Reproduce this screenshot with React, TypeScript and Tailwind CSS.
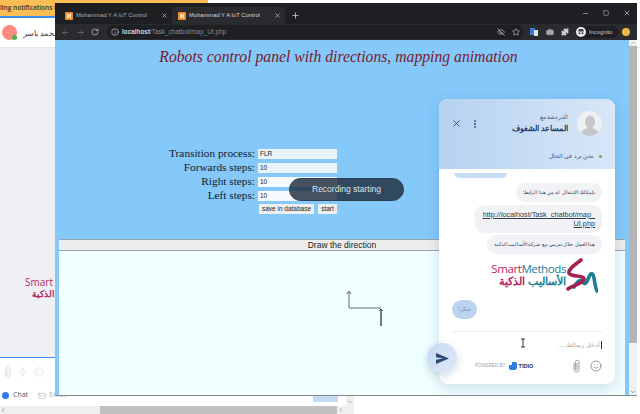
import { ArrowLeft, ArrowRight, RotateCw, Info, EyeOff, Star, Puzzle, X, Plus, Minus, Square, MoreVertical, Smile, Zap, Mail, ChevronUp, ChevronDown, ChevronLeft, ChevronRight, Camera } from "lucide-react";

const XamppIcon = () => (
  <svg width="8" height="8" viewBox="0 0 8 8" className="shrink-0">
    <rect width="8" height="8" rx="1" fill="#f08a24" />
    <path d="M2 2 L6 6 M6 2 L2 6" stroke="#fff3e0" strokeWidth="1.4" />
  </svg>
);

const Tab = ({ active }: { active?: boolean }) => (
  <div className={`flex h-[17px] w-[113px] items-center gap-[3px] rounded-t-[5px] pl-[6px] pr-[4px] text-[5.8px] ${active ? "bg-[#292b2f] text-[#d4d6d9]" : "text-[#a9acb0]"}`}>
    <XamppIcon />
    <span className="flex-1 whitespace-nowrap">Mohammad Y A IoT Control</span>
    <X size={7} strokeWidth={2} className="text-[#d8dadd]" />
  </div>
);

const FormRow = ({ label, value, tinted }: { label: string; value: string; tinted?: boolean }) => (
  <div className="flex h-[14px] items-center justify-end gap-[3px]">
    <span className="text-right text-[11.3px] leading-none text-[#10202c]">{label}</span>
    <span className={`flex h-[10px] w-[79px] items-center px-[2px] font-['Liberation_Sans',sans-serif] text-[6.5px] text-[#222] ${tinted ? "bg-[#e8f3fc]" : "bg-[#f6fafd]"}`}>{value}</span>
  </div>
);

const ChatBubble = ({ children, className }: { children: React.ReactNode; className?: string }) => (
  <div dir="rtl" className={`whitespace-nowrap rounded-[9px] bg-[#f0f2f6] px-[7px] py-[5px] text-[5.2px] leading-[9px] text-[#2d3645] ${className ?? ""}`}>{children}</div>
);

const ClipIcon = ({ color }: { color: string }) => (
  <svg width="9" height="14" viewBox="0 0 9 14" fill="none" stroke={color} strokeWidth="1">
    <path d="M2 4 V10.5 a2.5 2.5 0 0 0 5 0 V3 a1.8 1.8 0 0 0 -3.6 0 V10 a0.8 0.8 0 0 0 1.6 0 V4" />
  </svg>
);

const SmartLogo = () => (
  <div className="flex h-[36px] items-start justify-end pr-[4px]">
    <div className="mt-[4px] flex flex-col items-end font-['Open_Sans',sans-serif]">
      <span className="text-[11.5px] leading-[13px] tracking-[-0.4px]">
        <span className="text-[#b5275f]">Smart</span>
        <span className="text-[#1c7d94]">Methods</span>
      </span>
      <span dir="rtl" className="font-['Noto_Sans',sans-serif] text-[11px] font-semibold leading-[12px]">
        <span className="text-[#1c7d94]">الأساليب </span>
        <span className="text-[#b5275f]">الذكية</span>
      </span>
    </div>
    <svg width="34" height="36" viewBox="0 0 34 36" fill="none" className="-ml-[2px]">
      <path d="M10 29 C14 22 17 21 19 24 C21 28 23 24 25 19 C27 14 29 15 30 20 C31 25 31 29 33 33" stroke="#1c7d94" strokeWidth="3.6" strokeLinecap="round" />
      <path d="M17 2 C12 6 4 11 5 15 C6 19 20 17 20 21 C20 25 8 28 4 31" stroke="#a3234f" strokeWidth="3.6" strokeLinecap="round" />
    </svg>
  </div>
);

const ChatWidget = () => (
  <div className="absolute left-[439px] top-[99px] flex h-[285px] w-[176px] flex-col overflow-hidden rounded-[9px] bg-white shadow-[0_4px_14px_rgba(30,70,120,0.18)]">
    <div className="h-[70px] shrink-0 bg-gradient-to-r from-[#b5d2f1] to-[#d9e7f7] pl-[12px] pr-[13px] pt-[12px]">
      <div className="flex items-center">
        <X size={11} strokeWidth={2} className="text-[#2d4a70]" />
        <MoreVertical size={10} strokeWidth={2.5} className="ml-[8px] text-[#2d4a70]" />
        <div dir="rtl" className="ml-auto mr-[9px] text-right">
          <div className="text-[5.5px] leading-[9px] text-[#3d5575]">الدردشة مع</div>
          <div className="text-[8px] font-semibold leading-[12px] text-[#24406a]">المساعد الشغوف</div>
        </div>
        <div className="flex h-[25px] w-[25px] items-end justify-center overflow-hidden rounded-full bg-[#eef0f2]">
          <svg width="20" height="22" viewBox="0 0 20 22">
            <ellipse cx="10" cy="8" rx="5" ry="6.5" fill="#c5c7ca" />
            <path d="M0 22 C1 16 5 15 8 14 L12 14 C15 15 19 16 20 22 Z" fill="#c5c7ca" />
          </svg>
        </div>
      </div>
      <div className="mt-[16px] flex items-center justify-end gap-[5px]">
        <span dir="rtl" className="text-[5.5px] text-[#3d5a80]">نحن نرد في الحال</span>
        <span className="h-[3px] w-[3px] rounded-full bg-[#6aa84f]" />
      </div>
    </div>
    <div className="relative flex flex-1 flex-col items-end px-[13px] pt-[14px]">
      <div className="absolute left-[15px] top-[4px] h-[5px] w-[53px] rounded-b-[8px] bg-[#c8dcf3]" />
      <ChatBubble>بإمكانك الإنتقال له من هنا الرابط:</ChatBubble>
      <div className="mt-[3px] w-[127px] rounded-[9px] bg-[#f0f2f6] px-[7px] py-[5px] text-right font-['Liberation_Sans',sans-serif] text-[7.3px] leading-[9px] text-[#333b49] underline">
        http://localhost/Task_chatbot/map_
        <br />
        UI.php
      </div>
      <ChatBubble className="mt-[2px]">هذا العمل خلال تدريبي مع شركة الأساليب الذكية</ChatBubble>
      <div className="mt-[4px] w-full"><SmartLogo /></div>
      <div className="mt-[6px] self-start rounded-[10px] bg-[#bcd4f1] px-[6px] py-[5px] text-[6px] leading-[9px] text-[#7f98b8]" dir="rtl">شكرا</div>
      <div className="mt-[12px] h-px w-full bg-[#ecedf0]" />
      <div dir="rtl" className="mt-[9px] w-full text-[6px] leading-[9px] text-[#9a9fa6]"><span className="border-r border-[#333] pr-[1px]">أدخل رسالتك ...</span></div>
      <div className="mt-[9px] flex h-[14px] w-full items-center">
        <span className="ml-[23px] font-['Liberation_Sans',sans-serif] text-[4.5px] text-[#9da3ab]">POWERED BY</span>
        <svg width="8" height="8" viewBox="0 0 8 8" className="ml-[3px]">
          <path d="M0 3 H3 V0 H6 A2 2 0 0 1 8 2 V5 A3 3 0 0 1 5 8 H2 A2 2 0 0 1 0 6 Z" fill="#2f7be6" />
        </svg>
        <span className="ml-[2px] font-['Liberation_Sans',sans-serif] text-[5.5px] font-bold text-[#1f2d45]">TIDIO</span>
        <span className="ml-auto"><ClipIcon color="#97a1ac" /></span>
        <Smile size={12} strokeWidth={1.3} className="ml-[9px] text-[#5d6773]" />
      </div>
    </div>
  </div>
);

const BrowserWindow = () => (
  <div className="absolute left-[55px] top-[3px] flex h-[393px] w-[582px] flex-col overflow-hidden border-b border-[#888] bg-[#1d1f22] font-['Liberation_Sans',sans-serif]">
    <div className="flex h-[21px] shrink-0 items-end pl-[4px]">
      <Tab />
      <Tab active />
      <Plus size={9} strokeWidth={2} className="mb-[4px] ml-[6px] text-[#d8dadd]" />
      <div className="ml-auto mb-[7px] flex items-center gap-[14px] pr-[6px] text-[#c9cbce]">
        <Minus size={7} />
        <Square size={6} />
        <X size={8} />
      </div>
    </div>
    <div className="flex h-[16px] shrink-0 items-center gap-[6px] bg-[#292b2f] pl-[6px]">
      <ArrowLeft size={9} className="text-[#6d7074]" />
      <ArrowRight size={9} className="text-[#6d7074]" />
      <RotateCw size={8} className="text-[#c9cbce]" />
      <div className="ml-[2px] flex h-[14px] w-[417px] items-center gap-[3px] rounded-full bg-[#1d1f22] pl-[4px] text-[6.4px]">
        <Info size={8} className="text-[#c9cbce]" />
        <span className="font-bold text-[#d4d6d9]">localhost</span>
        <span className="-ml-[3px] text-[#8b8e92]">/Task_chatbot/map_UI.php</span>
        <EyeOff size={8} className="ml-auto text-[#c9cbce]" />
        <Star size={8} className="ml-[4px] mr-[4px] text-[#c9cbce]" />
      </div>
      <div className="flex items-center gap-[7.5px]">
        <svg width="8" height="8" viewBox="0 0 8 8">
          <rect width="5" height="7" fill="#3f78d6" />
          <rect x="4" y="2" width="4" height="6" fill="#dfe6f2" />
        </svg>
        <Camera size={8} fill="#a5a7aa" className="text-[#a5a7aa]" />
        <Puzzle size={8} fill="#d4d6d9" className="text-[#d4d6d9]" />
      </div>
      <div className="ml-[1px] flex h-[12px] w-[42px] items-center gap-[3px] rounded-full bg-[#1d1f22]">
        <svg width="10" height="10" viewBox="0 0 10 10" className="shrink-0">
          <circle cx="5" cy="5" r="5" fill="#ececec" />
          <path d="M2 4.5 H8 L7 2 H3 Z" fill="#3a3c40" />
          <circle cx="3.5" cy="6.3" r="1" fill="#3a3c40" />
          <circle cx="6.5" cy="6.3" r="1" fill="#3a3c40" />
        </svg>
        <span className="text-[5.8px] text-[#c9cbce]">Incognito</span>
      </div>
      <span className="-ml-[2px] h-[8px] w-[8px] rounded-full bg-[#f0b64a]" />
    </div>
    <div className="flex min-h-0 flex-1">
      <div className="flex min-w-0 flex-1 flex-col bg-[#85c8fa] font-['Liberation_Serif',serif]">
        <h1 className="mt-[5px] h-[28px] pr-[7px] text-center text-[15.7px] italic leading-[24px] text-[#7b1a2e]">Robots control panel with directions, mapping animation</h1>
        <div className="ml-[54px] mt-[74px] flex w-[228px] flex-col">
          <FormRow label="Transition process:" value="FLR" tinted />
          <FormRow label="Forwards steps:" value="10" tinted />
          <FormRow label="Right steps:" value="10" />
          <FormRow label="Left steps:" value="10" />
          <div className="mt-[1px] flex justify-start gap-[4px] pl-[150px] font-['Liberation_Sans',sans-serif] text-[6.5px] text-[#222]">
            <span className="flex h-[10px] w-[55px] items-center justify-center bg-[#efefef]">save in database</span>
            <span className="flex h-[10px] w-[19px] items-center justify-center bg-[#efefef]">start</span>
          </div>
        </div>
        <div className="mx-[4px] mt-[25px] flex h-[12px] shrink-0 items-center justify-center border-y border-[#9aa3aa] bg-[#ededed] font-['Liberation_Sans',sans-serif] text-[8.5px] text-[#222]">Draw the direction</div>
        <div className="mx-[4px] flex-1 bg-[#f0ffff]">
          <svg width="60" height="40" viewBox="0 0 60 40" className="ml-[284px] mt-[38px]">
            <path d="M6 19 V3 M4 5 L6 2 L8 5 M6 19 H38 M36 22 L38 20 L40 22" stroke="#666c72" strokeWidth="1" fill="none" />
            <path d="M38 37 V20" stroke="#333" strokeWidth="1.3" fill="none" />
          </svg>
        </div>
      </div>
      <div className="flex w-[8px] shrink-0 flex-col items-center bg-[#f1f1f1]">
        <ChevronUp size={6} className="text-[#777]" />
        <div className="h-[297px] w-full bg-[#b4b4b4]" />
        <div className="flex-1" />
        <ChevronDown size={6} className="text-[#333]" />
      </div>
    </div>
  </div>
);

const BackgroundApp = () => (
  <div className="absolute inset-0 flex flex-col bg-white font-['Open_Sans',sans-serif]">
    <div className="h-[16px] w-[208px] shrink-0 whitespace-nowrap bg-[#fbbd54] text-[6.5px] font-semibold leading-[15px] text-[#333]">ling notifications t</div>
    <div className="h-[2px] w-[208px] shrink-0 bg-[#3d8ef0]" />
    <div className="flex h-[30px] shrink-0 items-center gap-[6px] border-b border-[#e5e6ea] px-[2px]">
      <span className="relative h-[15px] w-[15px] rounded-full bg-[#ff8a80]">
        <span className="absolute bottom-0 right-0 h-[5px] w-[5px] rounded-full bg-[#4caf50]" />
      </span>
      <span dir="rtl" className="text-[8px] text-[#444]">محمد ياسر</span>
    </div>
    <div className="flex h-[310px] w-[208px] shrink-0 flex-col border-b border-[#3d8ef0] bg-[#eff0f4] pl-[25px] pt-[228px]">
      <span className="text-[10px] leading-[12px] text-[#b5275f]">Smart</span>
      <span dir="rtl" className="w-[30px] text-[9px] font-semibold leading-[12px] text-[#b5275f]">الذكية</span>
    </div>
    <div className="flex h-[27px] shrink-0 items-center gap-[6px] pl-[3px] text-[#dfe2e6]">
      <ClipIcon color="#dfe2e6" />
      <Zap size={10} />
      <Smile size={10} />
    </div>
    <div className="mt-[6px] flex h-[9px] items-center gap-[3px] pl-[2px] text-[7px] text-[#555]">
      <span className="h-[7px] w-[7px] rounded-full bg-[#2f7be6]" />
      <span className="ml-[1px]">Chat</span>
      <Mail size={8} className="ml-[7px] text-[#b6bcc5]" />
      <span className="text-[#aab0b8]">Email</span>
    </div>
    <div className="mt-auto flex h-[8px] w-[346px] items-center bg-[#efefef]">
      <ChevronLeft size={6} className="text-[#444]" />
      <div className="ml-[94px] h-full w-[237px] bg-[#c1c1c1]" />
      <ChevronRight size={6} className="ml-[1px] text-[#666]" />
    </div>
    <div className="absolute left-[346px] top-[396px] flex h-[18px] w-[8px] flex-col items-center bg-[#efefef] pt-[3px]">
      <ChevronDown size={6} className="text-[#666]" />
    </div>
  </div>
);

export default function App() {
  return (
    <div className="relative h-[414px] w-[640px] overflow-hidden bg-white">
      <BackgroundApp />
      <BrowserWindow />
      <div className="absolute left-[313px] top-[396px] h-[6px] w-[25px] bg-[#c5daf5]" />
      <div className="absolute left-[289px] top-[178px] flex h-[23px] w-[115px] items-center justify-center rounded-full border border-[#2c3e50] bg-[rgba(30,45,60,0.82)] font-['Liberation_Sans',sans-serif] text-[8.5px] text-[#dfe5ea]">Recording starting</div>
      <ChatWidget />
      <div className="absolute left-[427px] top-[343px] flex h-[30px] w-[30px] items-center justify-center rounded-full bg-gradient-to-br from-[#c5d9f2] to-[#dde9f8] shadow-[0_3px_8px_rgba(30,70,120,0.2)]">
        <svg width="13" height="11" viewBox="0 0 13 11">
          <path d="M0 0 L13 5.5 L0 11 L0 6.8 L7 5.5 L0 4.2 Z" fill="#2d4a70" />
        </svg>
      </div>
      <svg width="6" height="10" viewBox="0 0 6 10" className="absolute left-[520px] top-[338px]">
        <path d="M1 1 H5 M3 1 V9 M1 9 H5" stroke="#333" strokeWidth="1" fill="none" />
      </svg>
    </div>
  );
}
